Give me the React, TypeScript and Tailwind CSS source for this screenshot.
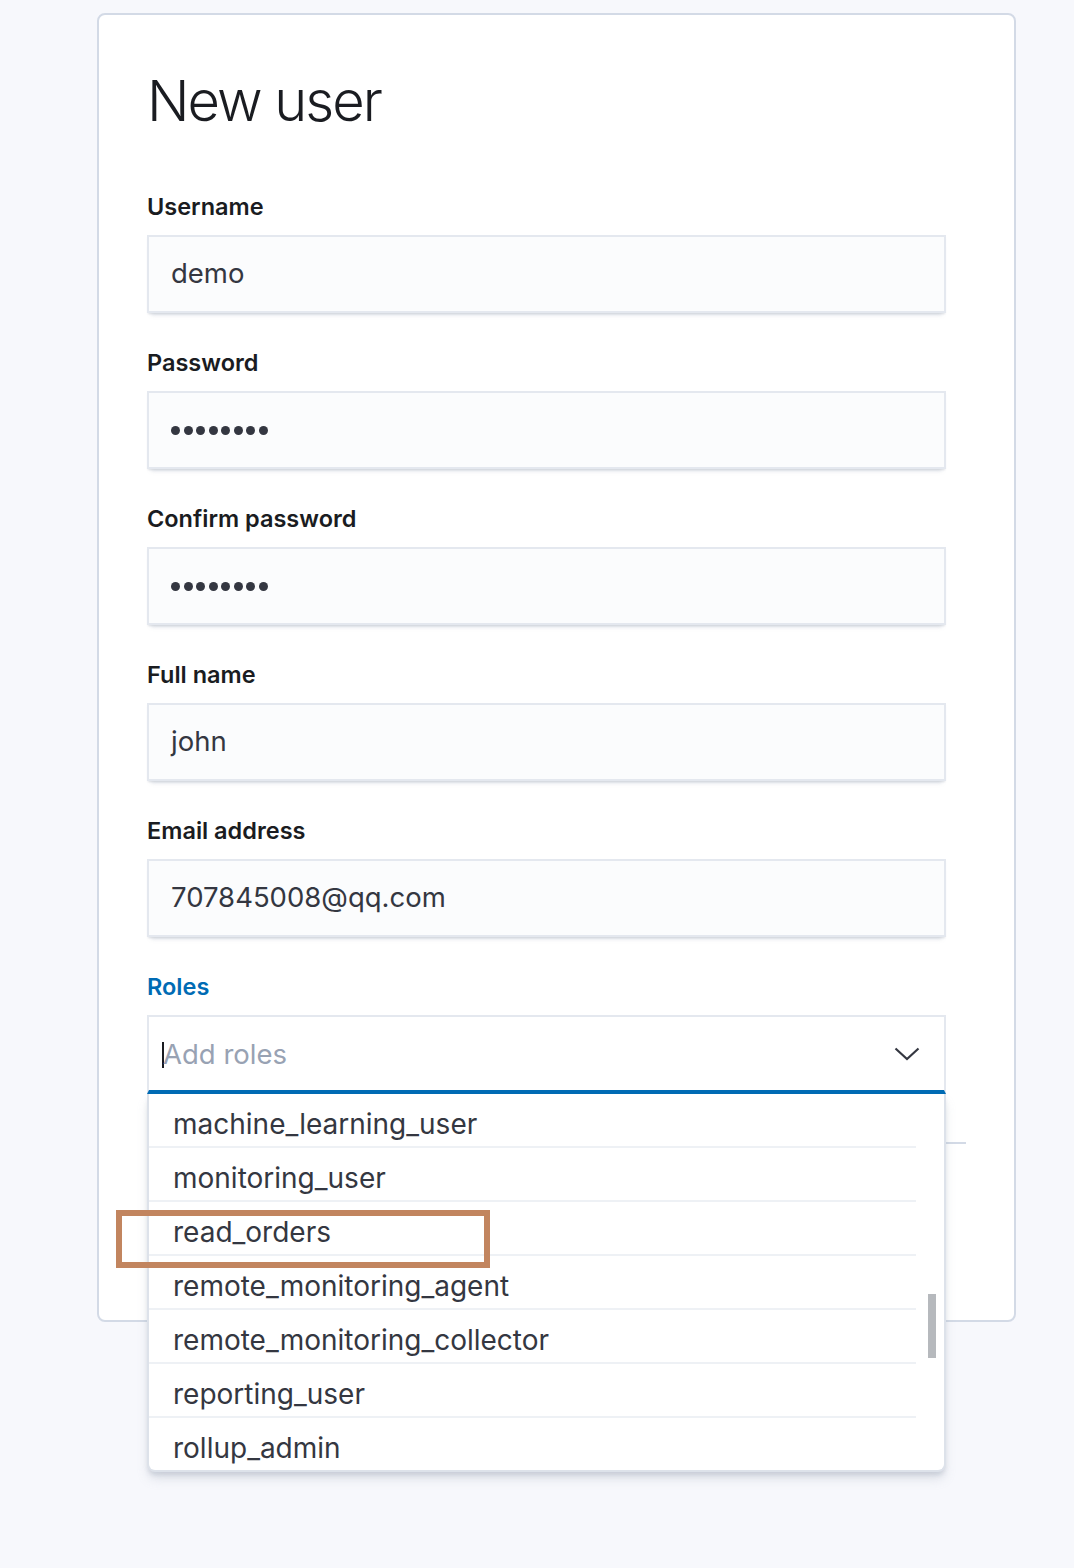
const fields = [
  { label: "Username", value: "demo" },
  { label: "Password", dots: true },
  { label: "Confirm password", dots: true },
  { label: "Full name", value: "john" },
  { label: "Email address", value: "707845008@qq.com" },
];

const roles = [
  "machine_learning_user",
  "monitoring_user",
  "read_orders",
  "remote_monitoring_agent",
  "remote_monitoring_collector",
  "reporting_user",
  "rollup_admin",
];

function Dots() {
  return (
    <div className="flex items-center gap-[3.5px]">
      {Array.from({ length: 8 }).map((_, i) => (
        <span key={i} className="w-[9px] h-[9px] rounded-full bg-[#343741]" />
      ))}
    </div>
  );
}

export default function App() {
  return (
    <main className="min-h-screen bg-[#f7f8fc] pt-[13px] pl-[97px] font-['Inter',sans-serif] text-[#343741]">
      <div className="relative w-[919px] h-[1309px] bg-white border-2 border-[#d3dae6] rounded-[8px] pl-[48px] pr-[48px] pt-[52px]">

        {/* Title */}
        <h1 className="text-[56px] leading-[68px] font-light text-[#1a1c21] tracking-[-2px]">
          New user
        </h1>

        {/* Fields */}
        <div className="mt-[58px] flex flex-col gap-[36px]">
          {fields.map((f) => (
            <div key={f.label}>
              <div className="text-[23.5px] leading-[28px] font-semibold text-[#1a1c21] mb-[14px]">
                {f.label}
              </div>
              <div className="w-[799px] h-[78px] bg-[#fbfcfd] border-2 border-[#e4e8ef] flex items-center pl-[22px] text-[27.5px] shadow-[0_2px_2px_-1px_rgba(152,162,179,0.3),0_6px_4px_-4px_rgba(152,162,179,0.3)]">
                {f.dots ? <Dots /> : f.value}
              </div>
            </div>
          ))}

          {/* Roles */}
          <div>
            <div className="text-[23.5px] leading-[28px] font-semibold text-[#006bb4] mb-[14px]">
              Roles
            </div>
            <div className="w-[799px] h-[79px] bg-white border-t-2 border-x-2 border-b-[4px] border-t-[#e4e8ef] border-x-[#e4e8ef] border-b-[#006bb4] flex items-center pl-[13px] pr-[24px] pt-[2px]">
              <span className="w-[2px] h-[26px] bg-[#1a1c21]" />
              <span className="text-[27.5px] text-[#98a2b3] -ml-px flex-1">
                Add roles
              </span>
              <svg width="26" height="14" viewBox="0 0 26 14" className="-mt-[2px]">
                <polyline
                  points="1.5,1.5 13,12 24.5,1.5"
                  fill="none"
                  stroke="#343741"
                  strokeWidth="2.2"
                />
              </svg>
            </div>
          </div>
        </div>

        <div className="mt-[48px] h-[2px] bg-[#d3dae6]" />

        {/* Dropdown */}
        <div className="absolute left-[48px] top-[1079px] w-[799px] h-[378px] bg-white border-x-2 border-b-2 border-[#dde2ea] rounded-b-[8px] shadow-[0_8px_12px_-2px_rgba(152,162,179,0.3),0_4px_4px_-1px_rgba(152,162,179,0.3)]">
          <div className="w-[767px]">
            {roles.map((r, i) => (
              <div
                key={r}
                className={
                  i < roles.length - 1
                    ? "h-[54px] flex items-center pl-[24px] pt-[7px] text-[28px] border-b-2 border-[#eef1f5]"
                    : "h-[52px] flex items-center pl-[24px] pt-[7px] text-[28px]"
                }
              >
                {r}
              </div>
            ))}
          </div>
          <div className="absolute left-[779px] top-[200px] w-[8px] h-[64px] bg-[#b6b9bd]" />
        </div>

        {/* Highlight */}
        <div className="absolute left-[17px] top-[1195px] w-[374px] h-[58px] border-[6px] border-[#c2855f]" />
      </div>
    </main>
  );
}
